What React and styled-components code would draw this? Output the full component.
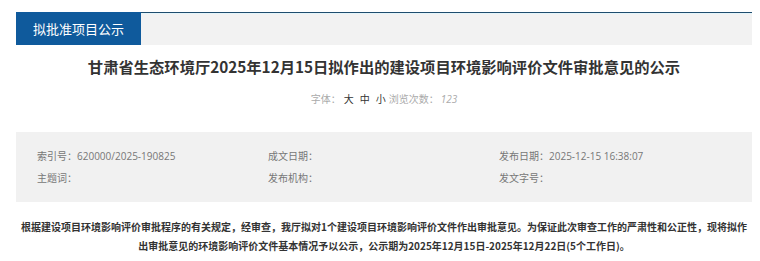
import React from "react";
import styled, { createGlobalStyle } from "styled-components";

const Global = createGlobalStyle`
  html, body { margin: 0; padding: 0; background: #fff; }
  body { font-family: "Noto Sans CJK SC", "Open Sans", sans-serif; }
`;

const Page = styled.div`
  padding: 12px 8px 0 16px;
  width: 736px;
`;

const Header = styled.div`
  display: flex;
  height: 32px;
  background: #f2f2f2;
  border-top: 1px solid #1f4d6e;
  box-shadow: inset 0 1px 0 #e4f5fa;
`;

const Tab = styled.div`
  width: 125px;
  margin-top: -1px;
  height: 33px;
  background: #0f5a9c;
  color: #fff;
  font-size: 13px;
  display: flex;
  align-items: center;
  justify-content: center;
  font-family: "Noto Sans CJK SC", sans-serif;
`;

const Title = styled.h1`
  margin: 9px 0 0;
  font-size: 15.3px;
  line-height: 24px;
  font-weight: 700;
  color: #333;
  text-align: center;
`;

const Meta = styled.div`
  margin-top: 11px;
  line-height: 20px;
  font-size: 10px;
  color: #aaa;
  text-align: center;
`;

const Size = styled.span`
  color: #333;
  margin: 0 3px;
`;

const Count = styled.span`
  font-style: italic;
  font-family: "Open Sans", sans-serif;
  margin-left: 2px;
`;

const InfoBox = styled.div`
  margin-top: 23px;
  background: #f1f1f1;
  padding: 13px 22px 13px 21px;
  display: grid;
  grid-template-columns: repeat(3, 231px);
  grid-auto-rows: 22px;
`;

const Cell = styled.div`
  font-size: 10px;
  line-height: 22px;
  color: #777;
  font-family: "Open Sans", "Noto Sans CJK SC", sans-serif;
  white-space: nowrap;
`;

const Notice = styled.p`
  margin: 15px 0 0;
  font-size: 10px;
  line-height: 19px;
  font-weight: 700;
  color: #333;
  text-align: center;
  padding: 0 2px;
`;

export default function App() {
  const cells = [
    "索引号：620000/2025-190825",
    "成文日期：",
    "发布日期：2025-12-15 16:38:07",
    "主题词：",
    "发布机构：",
    "发文字号：",
  ];
  return (
    <Page>
      <Global />
      <Header>
        <Tab>拟批准项目公示</Tab>
      </Header>
      <Title>甘肃省生态环境厅2025年12月15日拟作出的建设项目环境影响评价文件审批意见的公示</Title>
      <Meta>
        字体：<Size>大</Size><Size>中</Size><Size>小</Size>浏览次数：<Count>123</Count>
      </Meta>
      <InfoBox>
        {cells.map((c) => (
          <Cell key={c}>{c}</Cell>
        ))}
      </InfoBox>
      <Notice>
        根据建设项目环境影响评价审批程序的有关规定，经审查，我厅拟对1个建设项目环境影响评价文件作出审批意见。为保证此次审查工作的严肃性和公正性，现将拟作出审批意见的环境影响评价文件基本情况予以公示，公示期为2025年12月15日-2025年12月22日(5个工作日)。
      </Notice>
    </Page>
  );
}
